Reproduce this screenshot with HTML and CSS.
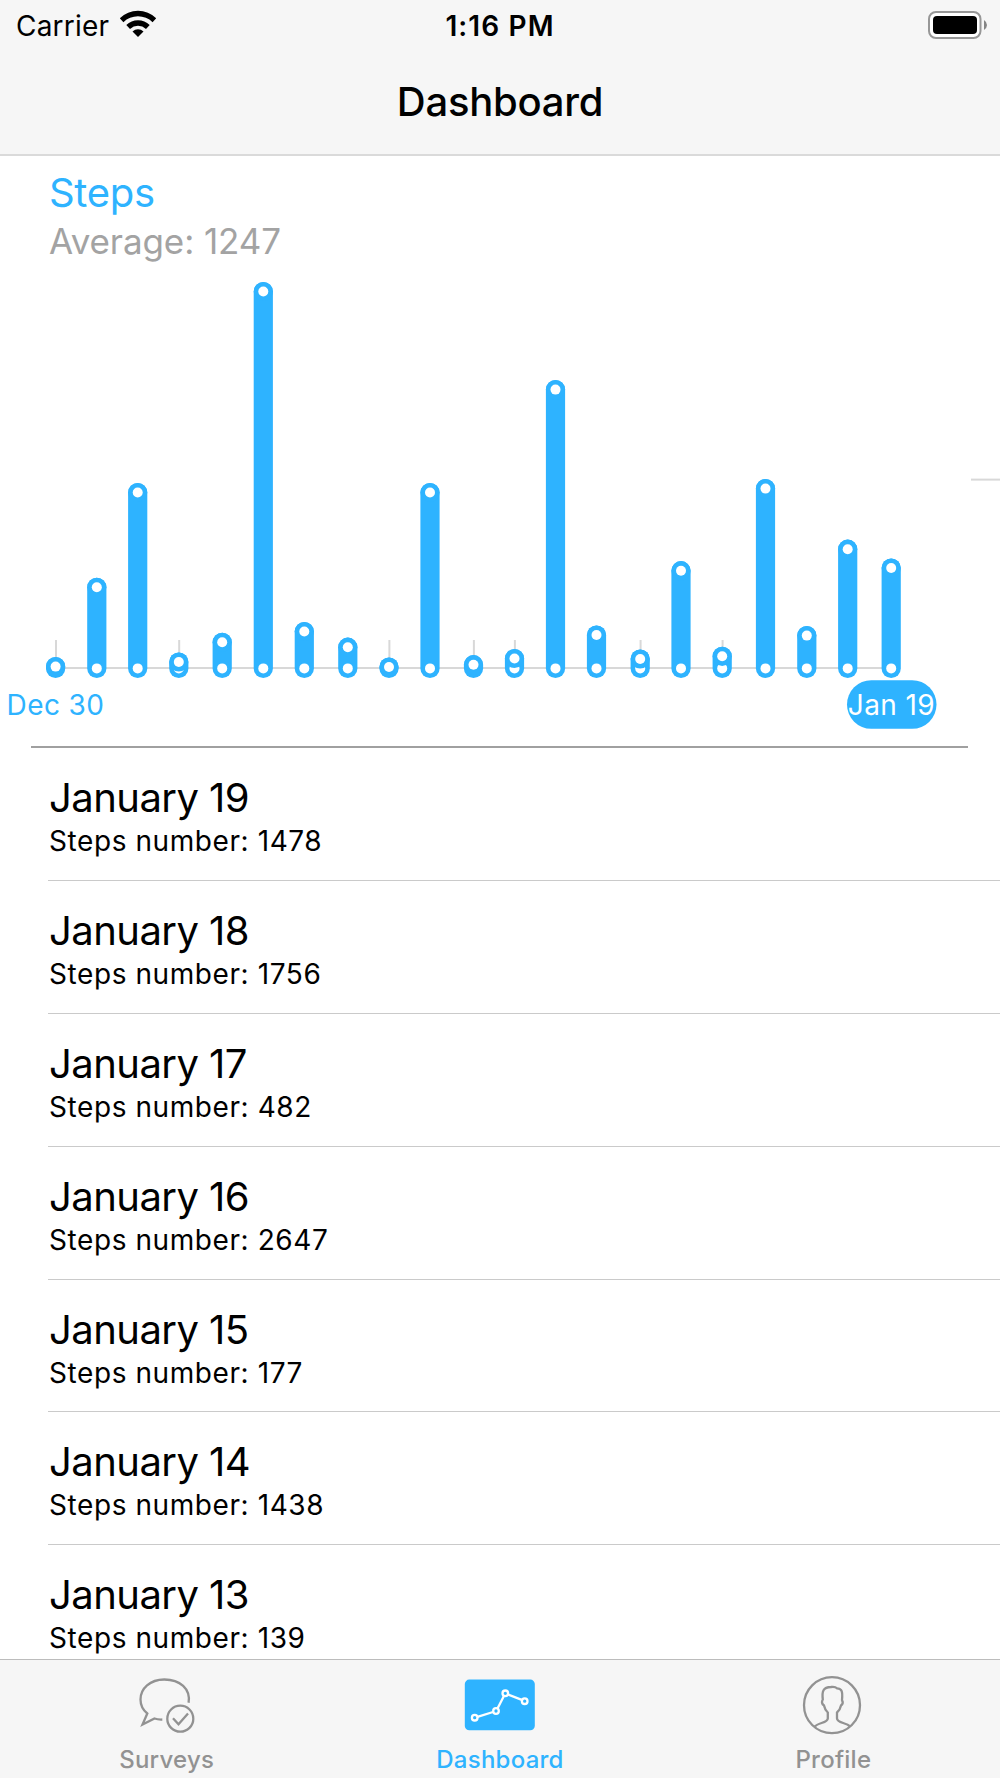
FILE: index.html
```
<!DOCTYPE html>
<html lang="en">
<head>
    <meta charset="UTF-8">
    <meta name="viewport" content="width=device-width, initial-scale=1.0">
    <title>Dashboard</title>
    <link rel="stylesheet" href="styles.css">
</head>
<body>
    <header class="header">
        <div class="status-bar">
            <div class="carrier">
                <span>Carrier</span>
                <svg class="wifi" width="38" height="28" viewBox="0 0 38 28">
                    <path d="M0.8 8.3 A26 26 0 0 1 37.2 8.3 L33.6 12.2 A21 21 0 0 0 4.4 12.2 Z"/>
                    <path d="M7.3 15 A16.8 16.8 0 0 1 30.7 15 L27 18.9 A11.8 11.8 0 0 0 11 18.9 Z"/>
                    <path d="M13.5 21.4 A8 8 0 0 1 24.5 21.4 L19 27 Z"/>
                </svg>
            </div>
            <div class="time">1:16 PM</div>
            <svg class="battery" width="60" height="28" viewBox="0 0 60 28">
                <rect x="1" y="1" width="51.5" height="26" rx="7" fill="#fff" stroke="#979797" stroke-width="2"/>
                <rect x="5" y="5" width="44" height="18" rx="4"/>
                <path d="M56 9 Q59 11 59 14 Q59 17 56 19 Z" fill="#858585"/>
            </svg>
        </div>
        <h1 class="title">Dashboard</h1>
    </header>

    <main class="content">
        <section class="chart">
            <h2 class="chart-title">Steps</h2>
            <p class="chart-average">Average: 1247</p>
            <svg class="chart-plot" width="1000" height="466" viewBox="0 270 1000 466">
                <line class="axis" x1="55" y1="668" x2="891" y2="668"/>
                <line class="axis" x1="971" y1="479.6" x2="1000" y2="479.6"/>
                <g id="bars"></g>
                <text class="date" x="55.5" y="715" text-anchor="middle">Dec 30</text>
                <rect class="pill" x="847" y="680.2" width="89.5" height="48.6" rx="24.3"/>
                <text class="date date-active" x="891.5" y="715" text-anchor="middle">Jan 19</text>
            </svg>
        </section>

        <ul class="list">
            <li><h3>January 19</h3><p>Steps number: 1478</p></li>
            <li><h3>January 18</h3><p>Steps number: 1756</p></li>
            <li><h3>January 17</h3><p>Steps number: 482</p></li>
            <li><h3>January 16</h3><p>Steps number: 2647</p></li>
            <li><h3>January 15</h3><p>Steps number: 177</p></li>
            <li><h3>January 14</h3><p>Steps number: 1438</p></li>
            <li><h3>January 13</h3><p>Steps number: 139</p></li>
        </ul>
    </main>

    <nav class="tabs">
        <a class="tab">
            <svg width="80" height="70" viewBox="0 0 80 70">
                <path d="M61.6 32.7 C63.8 19 53 9.5 37.3 9.5 C23 9.5 13.5 18.5 13.5 29.5 C13.5 35 16 40 20.3 43.5 L15.5 54.5 L27.5 48.5 Q31 49.7 35.3 49.5"/>
                <circle cx="53.3" cy="48.7" r="13"/>
                <path d="M46 48.3 L51.5 54.3 L61 43.5"/>
            </svg>
            <span>Surveys</span>
        </a>
        <a class="tab active">
            <svg width="80" height="70" viewBox="0 0 80 70">
                <rect class="tab-fill" x="4.8" y="9.6" width="70" height="50.6" rx="4.5"/>
                <path d="M17.5 46.8 L33 42 M37.5 38.5 L43.9 26 M48.2 24.5 L61.8 29.9"/>
                <circle cx="14.7" cy="47.7" r="2.8"/>
                <circle cx="36" cy="41" r="2.8"/>
                <circle cx="45.3" cy="23.3" r="2.8"/>
                <circle cx="64.7" cy="31.2" r="2.8"/>
            </svg>
            <span>Dashboard</span>
        </a>
        <a class="tab">
            <svg width="80" height="70" viewBox="0 0 80 70">
                <circle cx="39" cy="35.2" r="28"/>
                <path d="M21.8 56.5 C25 52.5 34.8 53 34.8 48.5 V42.5 C32.5 40.5 31.5 38 31 35.5 C29 34 28.6 31.5 29.8 29.5 C28.8 21.5 30 17 38 17 C41 16.5 42.5 16.8 44 18.3 C49 18.3 49.8 22 49 30 C50.2 32 49.8 34 48 35.5 C47.5 38 46.5 40.5 44 42.5 V48.5 C44 53 53.5 52.5 57 56.5"/>
            </svg>
            <span>Profile</span>
        </a>
    </nav>

    <script>
        // [x, y of the top point]
        const points = [
            [55.6, 666.6], [96.8, 587.3], [137.7, 492.5], [178.8, 662], [222.2, 642.3],
            [263.3, 291.5], [304.3, 631.5], [347.8, 647.2], [389, 667], [430, 492.5],
            [473.5, 664.7], [514.5, 658.5], [555.5, 389.6], [596.5, 635], [640.2, 659],
            [681, 570.7], [722.2, 656.3], [765.5, 488.6], [806.8, 635.6], [847.7, 549.2],
            [891.2, 568]
        ];
        const base = 668.4;
        let html = '';

        points.forEach(([x, y]) => {
            html += `<line class="axis" x1="${x + 0.4}" y1="640" x2="${x + 0.4}" y2="${base}"/>
                <line class="bar" x1="${x}" y1="${y}" x2="${x}" y2="${base}"/>
                <circle class="hole" cx="${x}" cy="${base}" r="5"/>
                <circle class="dot" cx="${x}" cy="${y}" r="9.6"/>
                <circle class="hole" cx="${x}" cy="${y}" r="5"/>`;
        });

        document.getElementById('bars').innerHTML = html;
    </script>
</body>
</html>
```

FILE: styles.css
```
* {
    box-sizing: border-box;
    margin: 0;
    padding: 0;
}
body {
    display: flex;
    flex-direction: column;
    height: 1778px;
    overflow: hidden;
    background-color: #fff;
    color: #000;
    font-family: Inter, "Liberation Sans", sans-serif;
}
.header {
    flex: none;
    height: 156px;
    background-color: #f6f6f6;
    border-bottom: 2px solid #dadada;
}
.status-bar {
    display: grid;
    grid-template-columns: 1fr auto 1fr;
    align-items: center;
    height: 48px;
    padding: 0 12px 0 16px;
    font-size: 28px;
}
.carrier {
    display: flex;
    align-items: center;
    gap: 10px;
    padding-top: 3px;
    letter-spacing: 0.2px;
}
.wifi {
    margin-top: -4px;
}
.time {
    padding: 3px 4px 0 0;
    font-weight: 600;
    letter-spacing: 1.1px;
}
.battery {
    justify-self: end;
    margin-top: 1px;
}
.title {
    padding-top: 30px;
    font-size: 40px;
    font-weight: 500;
    letter-spacing: -0.25px;
    line-height: 48px;
    text-align: center;
}
.content {
    flex: 1;
    min-height: 0;
    overflow: hidden;
}
.chart {
    height: 592px;
    padding-top: 13px;
}
.chart-title {
    padding-left: 49px;
    color: #2eb3ff;
    font-size: 40px;
    font-weight: 400;
    letter-spacing: -0.3px;
    line-height: 48px;
}
.chart-average {
    padding-left: 49px;
    color: #a3a3a3;
    font-size: 35px;
    letter-spacing: -0.1px;
    line-height: 48px;
}
.chart-plot {
    display: block;
    margin-top: 5px;
}
.axis {
    stroke: #d8d8d8;
    stroke-width: 2;
}
.bar {
    stroke: #2eb3ff;
    stroke-width: 19.2;
    stroke-linecap: round;
}
.dot, .pill {
    fill: #2eb3ff;
}
.hole {
    fill: #fff;
}
.date {
    fill: #2eb3ff;
    font-size: 28px;
    letter-spacing: 0.4px;
}
.date-active {
    fill: #fff;
}
.list {
    list-style: none;
}
.list::before {
    content: "";
    display: block;
    width: 937px;
    height: 2px;
    margin: -2px 0 0 31px;
    background-color: #a0a0a0;
}
.list li {
    height: 132.9px;
    margin-left: 48px;
    padding: 26px 0 0 1px;
    border-bottom: 1px solid #cacaca;
}
.list h3 {
    font-size: 40px;
    font-weight: 400;
    letter-spacing: -0.55px;
    line-height: 48px;
}
.list p {
    font-size: 28px;
    letter-spacing: 0.58px;
    line-height: 38px;
}
.tabs {
    flex: none;
    display: grid;
    grid-template-columns: repeat(3, 1fr);
    height: 119px;
    background-color: #f6f6f6;
    border-top: 1px solid #bcbcbc;
}
.tab {
    display: flex;
    flex-direction: column;
    align-items: center;
    padding-top: 10px;
    color: #929292;
    font-size: 24px;
    font-weight: 500;
    letter-spacing: 0.25px;
    line-height: 40px;
}
.tab svg {
    flex: none;
    fill: none;
    stroke: #929292;
    stroke-width: 2.3;
}
.tab.active {
    color: #2eb3ff;
}
.tab.active svg {
    stroke: #fff;
}
.tab .tab-fill {
    fill: #2eb3ff;
    stroke: none;
}
```
